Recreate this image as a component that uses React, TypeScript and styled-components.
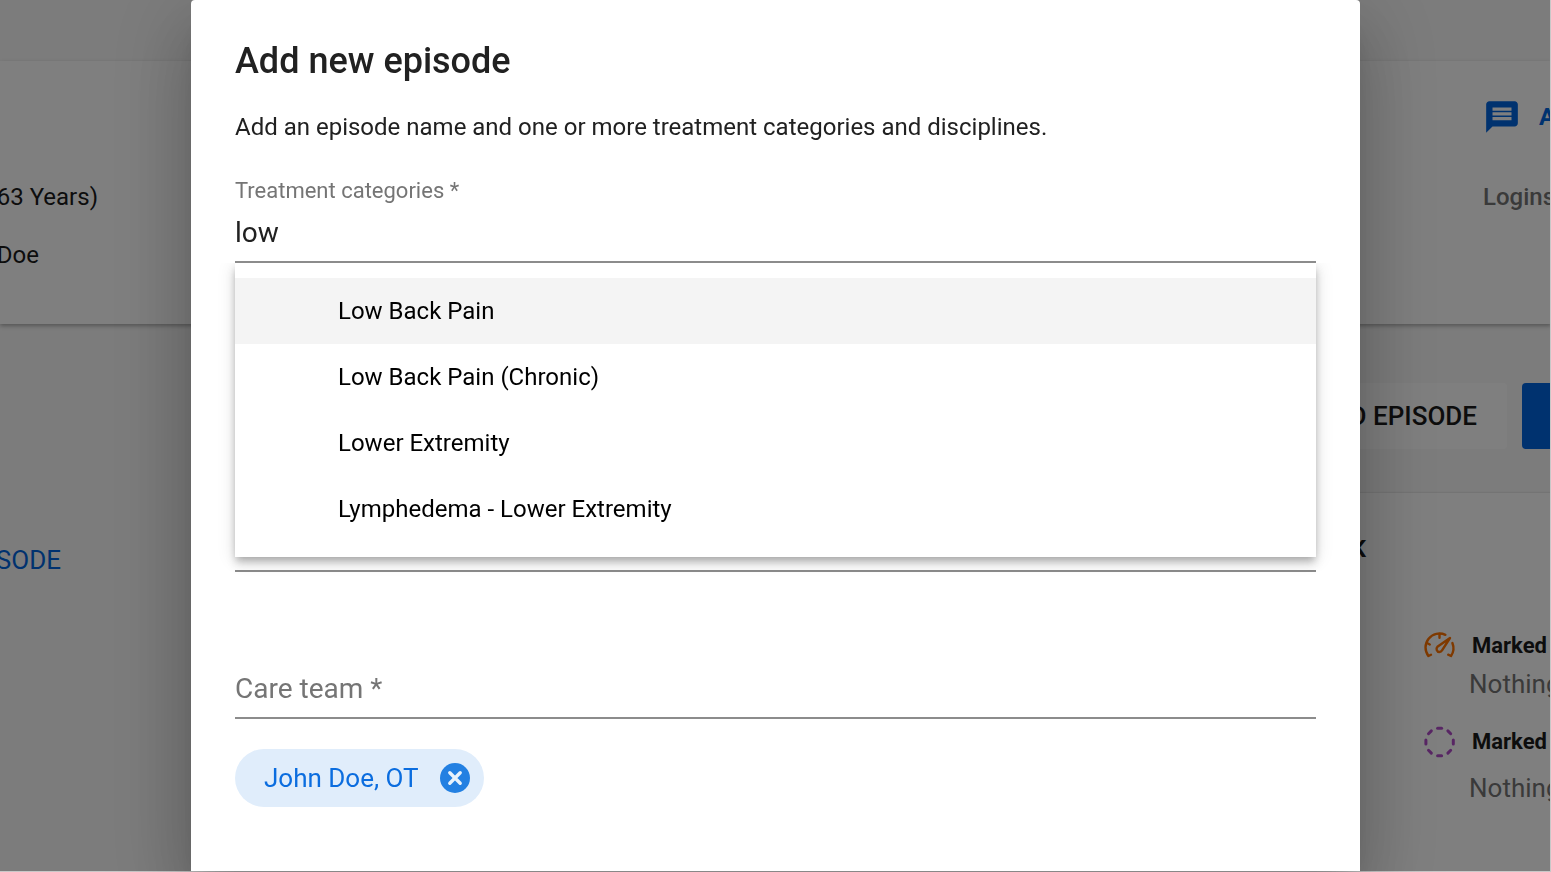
import React, { useState } from "react";
import styled, { createGlobalStyle } from "styled-components";
import { MdMessage } from "react-icons/md";

const GlobalStyle = createGlobalStyle`
  *, *::before, *::after { box-sizing: border-box; }
  html, body, #root { height: 100%; }
  body {
    margin: 0;
    overflow: hidden;
    font-family: Roboto, "Liberation Sans", sans-serif;
    font-size: 24px;
    line-height: 32px;
    color: #1a1a1a;
  }
  h1, h2, p, ul { margin: 0; padding: 0; }
  button, input { font: inherit; }
`;

const Page = styled.div`
  height: 100vh;
  display: flex;
  flex-direction: column;
  overflow: hidden;
  background: #f8f8f8;
`;

const TopBar = styled.header`
  flex: 0 0 61px;
`;

const PatientCard = styled.section`
  flex: 0 0 263px;
  display: flex;
  justify-content: space-between;
  background: #fff;
  box-shadow: 0 2px 4px rgba(0, 0, 0, 0.3);
`;

const PatientFacts = styled.div`
  padding-top: 120px;
  display: flex;
  flex-direction: column;
  gap: 26px;
`;

const EdgeText = styled.p<{ $width: number }>`
  display: flex;
  justify-content: flex-end;
  width: ${(p) => p.$width}px;
  white-space: nowrap;
`;

const PatientActions = styled.div`
  width: 68px;
  padding-top: 37px;
  display: flex;
  flex-direction: column;
  gap: 45px;
  overflow: hidden;
  white-space: nowrap;
  font-weight: 500;
`;

const MessageButton = styled.button`
  display: flex;
  align-items: center;
  gap: 18px;
  padding: 0;
  border: 0;
  background: none;
  color: #0064de;
  font-weight: 700;
  svg { flex: none; width: 38px; height: 38px; }
`;

const Muted = styled.p<{ $size?: number }>`
  font-size: ${(p) => p.$size ?? 24}px;
  color: #757575;
`;

const Workspace = styled.main`
  flex: 1;
  display: flex;
  justify-content: space-between;
  min-height: 0;
`;

const EpisodeNav = styled.nav`
  padding-top: 220px;
`;

const NavLink = styled.a`
  color: #0064de;
  font-size: 26px;
  text-decoration: none;
`;

const RightColumn = styled.div`
  width: 311px;
  display: flex;
  flex-direction: column;
`;

const ActionBar = styled.div`
  flex: 0 0 169px;
  display: flex;
  align-items: center;
  padding-top: 14px;
  gap: 15px;
  overflow: hidden;
`;

const ActionButton = styled.button<{ $primary?: boolean }>`
  flex: none;
  width: ${(p) => (p.$primary ? "160px" : "267px")};
  height: 66px;
  padding: 0 30px;
  border: 0;
  border-radius: 4px;
  text-align: right;
  font-size: 26px;
  font-weight: 500;
  color: #1a1a1a;
  background: ${(p) => (p.$primary ? "#0064de" : "#fff")};
`;

const TaskPanel = styled.section`
  flex: 1;
  padding-top: 40px;
  background: #fff;
  overflow: hidden;
  box-shadow: 0 0 2px rgba(0, 0, 0, 0.2);
`;

const PanelTitle = styled.h2`
  width: 126px;
  text-align: right;
  font-size: 24px;
  line-height: 32px;
  font-weight: 700;
`;

const TaskList = styled.ul`
  list-style: none;
  && { padding: 65px 0 0 183px; }
`;

const TaskItem = styled.li<{ $loose?: boolean }>`
  display: grid;
  grid-template-columns: 46px 1fr;
  row-gap: ${(p) => (p.$loose ? 14 : 6)}px;
  margin-bottom: 26px;
  white-space: nowrap;
  svg { width: 34px; height: 34px; margin: -1px 0; }
  p { grid-column: 2; }
`;

const TaskName = styled.h3`
  margin: 0;
  padding-left: 3px;
  font-size: 22px;
  line-height: 32px;
  font-weight: 700;
`;

const Backdrop = styled.div`
  position: fixed;
  inset: 0;
  display: flex;
  padding: 0 190px 0 191px;
  background: rgba(0, 0, 0, 0.5);
  border-right: 1px solid #c8c8c8;
  border-bottom: 1px solid #c8c8c8;
`;

const Dialog = styled.div`
  flex: 1;
  padding: 37px 44px 0;
  border-radius: 4px 4px 0 0;
  background: #fff;
  color: #212121;
  box-shadow: 0 20px 28px -13px rgba(0, 0, 0, 0.2),
    0 44px 70px 6px rgba(0, 0, 0, 0.14), 0 17px 84px 15px rgba(0, 0, 0, 0.12);
`;

const Title = styled.h1`
  font-size: 36px;
  line-height: 48px;
  font-weight: 500;
`;

const Description = styled.p`
  margin-top: 26px;
`;

const Field = styled.div<{ $gap: number }>`
  position: relative;
  margin-top: ${(p) => p.$gap}px;
`;

const FieldLabel = styled.label`
  display: block;
  font-size: 22px;
  line-height: 28px;
  color: #757575;
`;

const FieldInput = styled.input`
  display: block;
  width: 100%;
  height: 58px;
  padding: 0 0 2px;
  border: 0;
  border-bottom: 2px solid #8c8c8c;
  outline: 0;
  background: none;
  font-size: 28px;
  color: #212121;
  &::placeholder { color: #757575; opacity: 1; }
`;

const Menu = styled.ul`
  position: absolute;
  top: 100%;
  left: 0;
  right: 0;
  z-index: 1;
  && { padding: 15px 0; }
  list-style: none;
  background: #fff;
  clip-path: inset(0 -40px -40px -40px);
  box-shadow: 0 4px 7px -2px rgba(0, 0, 0, 0.2),
    0 7px 9px rgba(0, 0, 0, 0.14), 0 2px 18px rgba(0, 0, 0, 0.12);
`;

const MenuOption = styled.li<{ $active: boolean }>`
  padding: 17px 103px;
  color: #000;
  background: ${(p) => (p.$active ? "#f4f4f4" : "transparent")};
`;

const Chip = styled.span`
  display: inline-flex;
  align-items: center;
  gap: 19px;
  height: 58px;
  margin-top: 30px;
  padding: 0 12px 0 29px;
  border-radius: 29px;
  background: #e0edfb;
  color: #0b6ddf;
  font-size: 26px;
`;

const ChipRemove = styled.button`
  display: flex;
  padding: 0;
  border: 0;
  background: none;
  svg { width: 34px; height: 34px; }
`;

const GaugeIcon = () => (
  <svg viewBox="0 0 34 34" fill="none" stroke="#ff7300" strokeWidth="2.4" strokeLinecap="round" strokeLinejoin="round" aria-hidden="true">
    <path d="M22.4 5.8A14 14 0 0 0 5.4 27L8 25.7" />
    <path d="M29.4 14a14 14 0 0 1-1.400 13L25.200 25.700M16.500 5v3.800M4 14l2.800 1.500" />
    <path d="M27 9L14.400 17.800C12.600 19.600 13.800 23 16.400 23C17.800 23 18.600 22.200 19.200 21.200Z" />
  </svg>
);

const DashedCircleIcon = () => (
  <svg viewBox="0 0 34 34" fill="none" aria-hidden="true">
    {[0, 45, 90, 135, 180, 225, 270, 315].map((angle) => (
      <path key={angle} d="M14.600 3.300h4" stroke="#b04cc8" strokeWidth="3" strokeLinecap="round" transform={`rotate(${angle} 16.6 17)`} />
    ))}
  </svg>
);

const RemoveIcon = () => (
  <svg viewBox="0 0 34 34" aria-hidden="true">
    <circle cx="17" cy="17" r="15" fill="#2380e2" />
    <path d="M11.800 11.800l10.400 10.400M22.200 11.800L11.800 22.200" stroke="#e8f2fc" strokeWidth="3.400" strokeLinecap="round" />
  </svg>
);

const categories = [
  "Low Back Pain",
  "Low Back Pain (Chronic)",
  "Lower Extremity",
  "Lymphedema - Lower Extremity",
];

export default function App() {
  const [query, setQuery] = useState("low");
  const [active, setActive] = useState(0);
  const [hasMember, setHasMember] = useState(true);

  return (
    <>
      <GlobalStyle />
      <Page>
        <TopBar />
        <PatientCard>
          <PatientFacts>
            <EdgeText $width={98}>63 Years)</EdgeText>
            <EdgeText $width={39}>Doe</EdgeText>
          </PatientFacts>
          <PatientActions>
            <MessageButton type="button">
              <MdMessage aria-hidden="true" />A
            </MessageButton>
            <Muted>Logins</Muted>
          </PatientActions>
        </PatientCard>
        <Workspace>
          <EpisodeNav>
            <EdgeText $width={61}>
              <NavLink href="#episode">SODE</NavLink>
            </EdgeText>
          </EpisodeNav>
          <RightColumn>
            <ActionBar>
              <ActionButton type="button">ADD EPISODE</ActionButton>
              <ActionButton type="button" $primary aria-label="Continue" />
            </ActionBar>
            <TaskPanel>
              <PanelTitle>K</PanelTitle>
              <TaskList>
                <TaskItem>
                  <GaugeIcon />
                  <TaskName>Marked</TaskName>
                  <Muted $size={26}>Nothing</Muted>
                </TaskItem>
                <TaskItem $loose>
                  <DashedCircleIcon />
                  <TaskName>Marked</TaskName>
                  <Muted $size={26}>Nothing</Muted>
                </TaskItem>
              </TaskList>
            </TaskPanel>
          </RightColumn>
        </Workspace>
      </Page>
      <Backdrop>
        <Dialog role="dialog" aria-modal="true" aria-labelledby="dialog-title">
          <Title id="dialog-title">Add new episode</Title>
          <Description>
            Add an episode name and one or more treatment categories and disciplines.
          </Description>
          <Field $gap={34}>
            <FieldLabel htmlFor="categories">Treatment categories *</FieldLabel>
            <FieldInput
              id="categories"
              role="combobox"
              aria-expanded="true"
              aria-controls="category-options"
              value={query}
              onChange={(e) => setQuery(e.target.value)}
            />
            <Menu id="category-options" role="listbox">
              {categories.map((name, i) => (
                <MenuOption
                  key={name}
                  role="option"
                  aria-selected={i === active}
                  $active={i === active}
                  onMouseEnter={() => setActive(i)}
                >
                  {name}
                </MenuOption>
              ))}
            </Menu>
          </Field>
          <Field $gap={251}>
            <FieldInput aria-label="Disciplines" />
          </Field>
          <Field $gap={89}>
            <FieldInput aria-label="Care team" placeholder="Care team *" />
          </Field>
          {hasMember && (
            <Chip>
              John Doe, OT
              <ChipRemove type="button" aria-label="Remove John Doe, OT" onClick={() => setHasMember(false)}>
                <RemoveIcon />
              </ChipRemove>
            </Chip>
          )}
        </Dialog>
      </Backdrop>
    </>
  );
}
